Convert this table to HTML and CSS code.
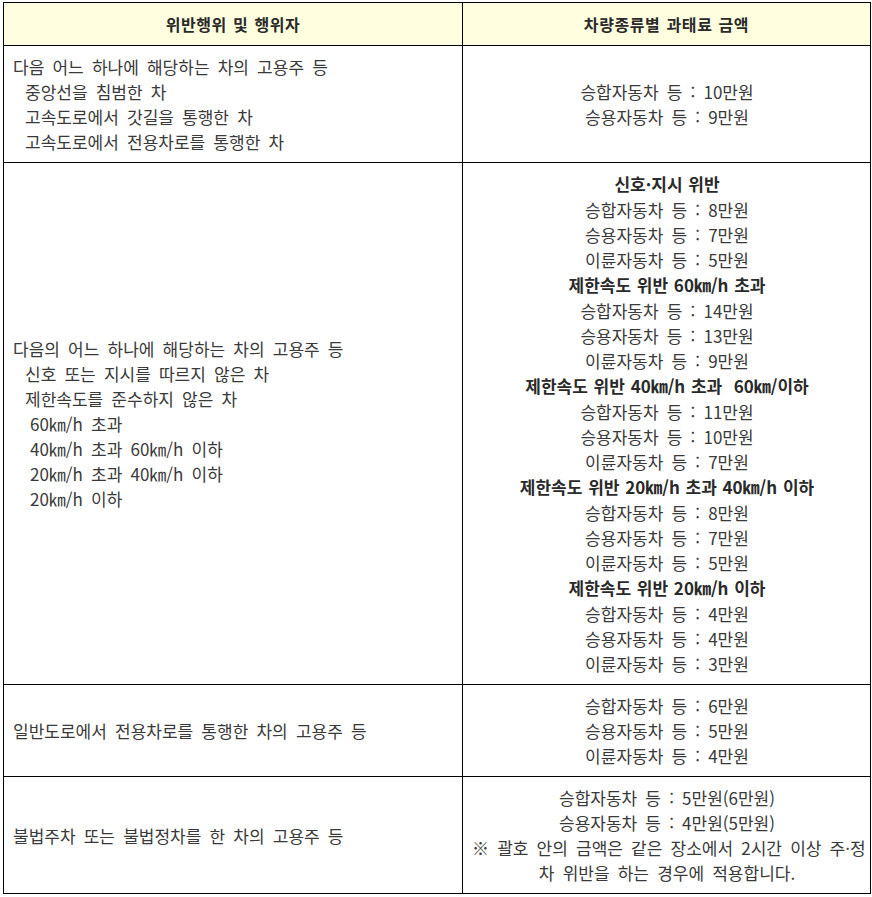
FILE: index.html
```html
<!DOCTYPE html>
<html lang="ko">
<head>
<meta charset="utf-8">
<title>과태료</title>
<link rel="stylesheet" href="styles.css">
</head>
<body>
<div class="wrap">
<table class="fine">
  <thead>
    <tr>
      <th class="c1">위반행위 및 행위자</th>
      <th class="c2">차량종류별 과태료 금액</th>
    </tr>
  </thead>
  <tbody>
    <tr class="r1">
      <td class="left">
        <div class="ln">다음 어느 하나에 해당하는 차의 고용주 등</div>
        <div class="ln i1">중앙선을 침범한 차</div>
        <div class="ln i1">고속도로에서 갓길을 통행한 차</div>
        <div class="ln i1">고속도로에서 전용차로를 통행한 차</div>
      </td>
      <td class="right">
        <div class="ln">승합자동차 등 : 10만원</div>
        <div class="ln">승용자동차 등 : 9만원</div>
      </td>
    </tr>
    <tr class="r2">
      <td class="left">
        <div class="ln">다음의 어느 하나에 해당하는 차의 고용주 등</div>
        <div class="ln i1">신호 또는 지시를 따르지 않은 차</div>
        <div class="ln i1">제한속도를 준수하지 않은 차</div>
        <div class="ln i2">60㎞/h 초과</div>
        <div class="ln i2">40㎞/h 초과 60㎞/h 이하</div>
        <div class="ln i2">20㎞/h 초과 40㎞/h 이하</div>
        <div class="ln i2">20㎞/h 이하</div>
      </td>
      <td class="right">
        <div class="ln b">신호·지시 위반</div>
        <div class="ln">승합자동차 등 : 8만원</div>
        <div class="ln">승용자동차 등 : 7만원</div>
        <div class="ln">이륜자동차 등 : 5만원</div>
        <div class="ln b">제한속도 위반 60㎞/h 초과</div>
        <div class="ln">승합자동차 등 : 14만원</div>
        <div class="ln">승용자동차 등 : 13만원</div>
        <div class="ln">이륜자동차 등 : 9만원</div>
        <div class="ln b">제한속도 위반 40㎞/h 초과&nbsp; 60㎞/이하</div>
        <div class="ln">승합자동차 등 : 11만원</div>
        <div class="ln">승용자동차 등 : 10만원</div>
        <div class="ln">이륜자동차 등 : 7만원</div>
        <div class="ln b">제한속도 위반 20㎞/h 초과 40㎞/h 이하</div>
        <div class="ln">승합자동차 등 : 8만원</div>
        <div class="ln">승용자동차 등 : 7만원</div>
        <div class="ln">이륜자동차 등 : 5만원</div>
        <div class="ln b">제한속도 위반 20㎞/h 이하</div>
        <div class="ln">승합자동차 등 : 4만원</div>
        <div class="ln">승용자동차 등 : 4만원</div>
        <div class="ln">이륜자동차 등 : 3만원</div>
      </td>
    </tr>
    <tr class="r3">
      <td class="left">
        <div class="ln">일반도로에서 전용차로를 통행한 차의 고용주 등</div>
      </td>
      <td class="right">
        <div class="ln">승합자동차 등 : 6만원</div>
        <div class="ln">승용자동차 등 : 5만원</div>
        <div class="ln">이륜자동차 등 : 4만원</div>
      </td>
    </tr>
    <tr class="r4">
      <td class="left">
        <div class="ln">불법주차 또는 불법정차를 한 차의 고용주 등</div>
      </td>
      <td class="right">
        <div class="ln">승합자동차 등 : 5만원(6만원)</div>
        <div class="ln">승용자동차 등 : 4만원(5만원)</div>
        <div class="ln">※ 괄호 안의 금액은 같은 장소에서 2시간 이상 주·정</div>
        <div class="ln">차 위반을 하는 경우에 적용합니다.</div>
      </td>
    </tr>
  </tbody>
</table>
</div>
</body>
</html>
```

FILE: styles.css
```css
html, body {
  margin: 0;
  padding: 0;
  background: #ffffff;
}

.wrap {
  padding: 2px 0 0 3px;
}

.fine {
  border-collapse: collapse;
  table-layout: fixed;
  width: 868px;
  font-family: "Noto Sans CJK KR", "Noto Sans", sans-serif;
  font-size: 17px;
  color: #3a3a3a;
  letter-spacing: 0;
  word-spacing: 3.4px;
}

.fine th,
.fine td {
  border: 1px solid #000000;
  vertical-align: middle;
}

.fine th {
  background: #ffffe0;
  font-weight: bold;
  font-size: 16px;
  color: #2a2a2a;
  height: 42px;
  padding: 0;
  text-align: center;
  line-height: 25px;
  letter-spacing: 0.6px;
  word-spacing: 1px;
}

.c1 {
  width: 458px;
}

.fine td {
  padding: 8px 8px 8px 9px;
}

.ln {
  line-height: 25px;
  white-space: nowrap;
}

.left {
  text-align: left;
}

.right {
  text-align: center;
}

.i1 {
  padding-left: 12px;
}

.i2 {
  padding-left: 17px;
}

.b {
  font-weight: bold;
  color: #2a2a2a;
  line-height: 26px;
  letter-spacing: 0;
  word-spacing: 1px;
}
```
